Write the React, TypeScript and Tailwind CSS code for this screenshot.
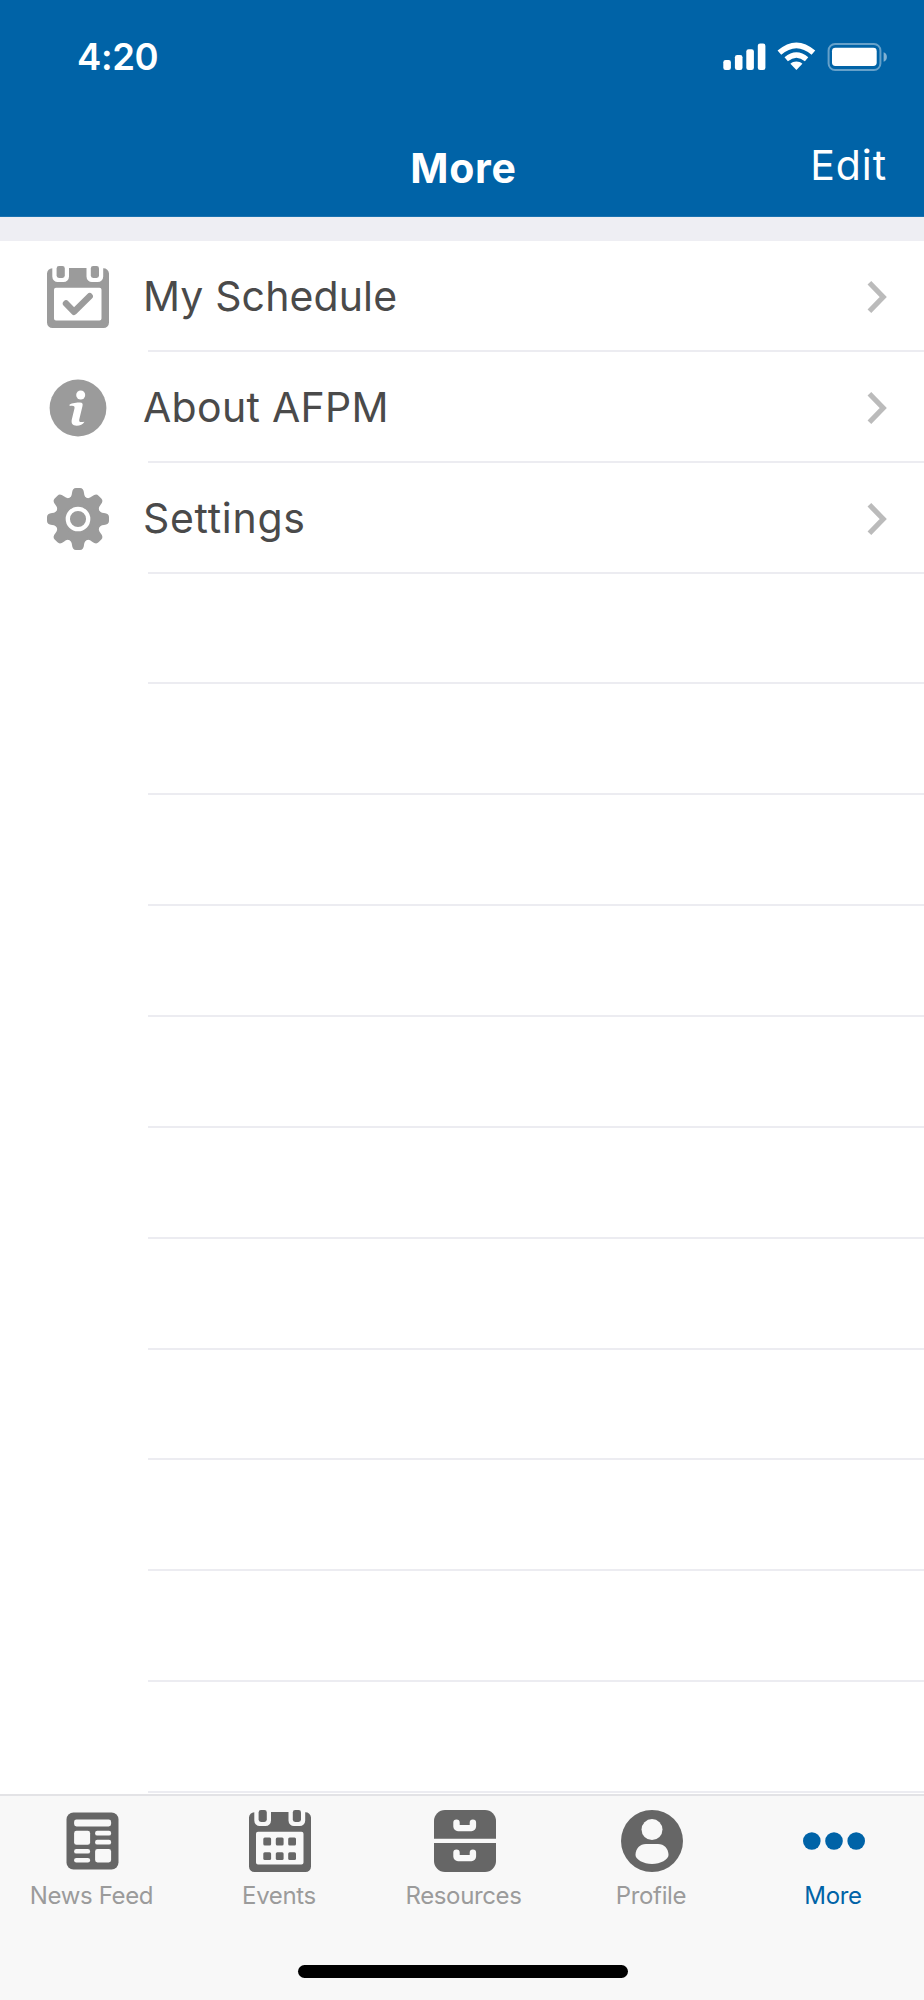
import type React from "react"

interface MenuItem {
  label: string
  icon: React.ReactNode
  tracking: string
}

interface TabItem {
  label: string
  icon: React.ReactNode
  width: string
  active?: boolean
}

const CalendarShell = ({ children }: { children: React.ReactNode }) => (
  <svg width="62" height="62" viewBox="0 0 62 62" fill="none">
    <path
      fill="currentColor"
      fillRule="evenodd"
      d="M5.3 2.2V10.5a5.5 5.5 0 0 0 5.5 5.5h5.7a5.5 5.5 0 0 0 5.5-5.5V2H39.5V10.5a5.5 5.5 0 0 0 5.5 5.5h5.7a5.5 5.5 0 0 0 5.5-5.5V2.2A5.5 5.5 0 0 1 62 7.5V56.5a5.5 5.5 0 0 1-5.5 5.5H5.5A5.5 5.5 0 0 1 0 56.5V7.5A5.5 5.5 0 0 1 5.3 2.2ZM9 21.8a2 2 0 0 0-2 2v28.6a2 2 0 0 0 2 2h43.5a2 2 0 0 0 2-2V23.8a2 2 0 0 0-2-2Z"
    />
    <rect x="9.6" y="0" width="8.2" height="12" rx="2.4" fill="currentColor" />
    <rect x="43.8" y="0" width="8.2" height="12" rx="2.4" fill="currentColor" />
    {children}
  </svg>
)

const ScheduleIcon = () => (
  <CalendarShell>
    <path d="M19 37.5L27 45.8L42.7 30.2" stroke="currentColor" strokeWidth="6.4" strokeLinecap="round" strokeLinejoin="round" />
  </CalendarShell>
)

const InfoIcon = () => (
  <svg width="62" height="62" viewBox="0 0 62 62">
    <circle cx="31" cy="31" r="28.4" fill="currentColor" />
    <circle cx="33.7" cy="18" r="4.5" fill="#fff" />
    <path
      fill="#fff"
      d="M22.6 27.4C25 25.9 30 25.4 33 25.4C35.6 25.4 36 26.8 35.5 29L32.3 42.2C31.8 44.6 32.600 45.800 37.500 44.700C36 47.500 33 48.800 29.700 48.800C25.500 48.800 24 46.400 24.800 42.600L27.400 31.800C28 29.200 27.200 28.200 22.600 28.900Z"
    />
  </svg>
)

const teeth = [0, 45, 90, 135, 180, 225, 270, 315]

const SettingsIcon = () => (
  <svg width="62" height="62" viewBox="0 0 62 62">
    <circle cx="31" cy="31" r="22.5" fill="currentColor" />
    {teeth.map((angle) => (
      <path
        key={angle}
        transform={`rotate(${angle} 31 31)`}
        fill="currentColor"
        d="M25 5Q25.5 0 29 0H33Q36.5 0 37 5Q37.3 9.5 41 10.5L40 16H22L21 10.5Q24.7 9.5 25 5Z"
      />
    ))}
    <circle cx="31" cy="31" r="10.2" fill="none" stroke="#fff" strokeWidth="4.3" />
  </svg>
)

const NewsIcon = () => (
  <svg width="62" height="62" viewBox="0 0 62 62">
    <g transform="translate(-0.5 0)">
      <rect x="5" y="2.5" width="52" height="57" rx="7" fill="currentColor" />
      <g fill="#f8f8f8">
        <rect x="12.6" y="9.5" width="37" height="7" rx="2.4" />
        <rect x="12.6" y="20.8" width="16" height="14" rx="2.4" />
        <rect x="33.6" y="20.8" width="16" height="4.8" rx="2.2" />
        <rect x="33.6" y="29.8" width="16" height="4.8" rx="2.2" />
        <rect x="12.6" y="39" width="16" height="4.6" rx="2.2" />
        <rect x="12.6" y="47.9" width="16" height="4.6" rx="2.2" />
        <rect x="33.6" y="39" width="16" height="13.5" rx="2.4" />
      </g>
    </g>
  </svg>
)

const EventsIcon = () => (
  <CalendarShell>
    {[27.6, 42.3].map((y) =>
      [14.3, 26.8, 39.2].map((x) => (
        <rect key={`${x}-${y}`} x={x} y={y} width="7.8" height="7.8" rx="1.5" fill="currentColor" />
      ))
    )}
  </CalendarShell>
)

const ResourcesIcon = () => (
  <svg width="62" height="62" viewBox="0 0 62 62">
    <path d="M0 28.8V11A11 11 0 0 1 11 0H51A11 11 0 0 1 62 11V28.8Z" fill="currentColor" />
    <path d="M0 33H62V51A11 11 0 0 1 51 62H11A11 11 0 0 1 0 51Z" fill="currentColor" />
    {[0, 30].map((y) => (
      <path
        key={y}
        transform={`translate(0 ${y})`}
        fill="#f8f8f8"
        d="M19.3 12.6a3.2 3.2 0 0 1 6.4 0V15H35.7V12.6a3.2 3.2 0 0 1 6.4 0V16.5a4.7 4.7 0 0 1-4.7 4.7H24a4.7 4.7 0 0 1-4.7-4.7Z"
      />
    ))}
  </svg>
)

const ProfileIcon = () => (
  <svg width="62" height="62" viewBox="0 0 62 62">
    <circle cx="31" cy="31" r="31" fill="currentColor" />
    <circle cx="31" cy="19.6" r="10.5" fill="#f8f8f8" />
    <path d="M14.5 45C14.5 38.5 19 34 25 34H37C43 34 47.5 38.5 47.5 45C47.5 49.5 39.5 54 31 54C22.5 54 14.5 49.5 14.5 45Z" fill="#f8f8f8" />
  </svg>
)

const DotsIcon = () => (
  <svg width="62" height="62" viewBox="0 0 62 62" fill="currentColor">
    <circle cx="8.8" cy="31" r="8.8" />
    <circle cx="31" cy="31" r="8.8" />
    <circle cx="53.2" cy="31" r="8.8" />
  </svg>
)

const StatusIcons = () => (
  <svg width="168" height="30" viewBox="0 0 168 30" fill="#fff">
    <rect x="1.3" y="18" width="7.6" height="10" rx="2.3" />
    <rect x="12.9" y="13" width="7.6" height="15" rx="2.3" />
    <rect x="24.3" y="7.3" width="7.6" height="20.7" rx="2.3" />
    <rect x="35.8" y="1.5" width="7.6" height="26.5" rx="2.3" />
    <path d="M74.4 28L68.4 21.7C71.5 18.7 77.3 18.7 80.4 21.7Z" />
    <path d="M64.2 17.3Q74.4 8.7 84.6 17.3" fill="none" stroke="#fff" strokeWidth="5.2" />
    <path d="M57.4 10.7Q74.4 -4 91.4 10.7" fill="none" stroke="#fff" strokeWidth="5.6" />
    <rect x="106.6" y="2" width="51.8" height="26" rx="6.5" fill="none" stroke="#fff" strokeOpacity=".4" strokeWidth="2" />
    <rect x="110" y="5.8" width="44.7" height="18.2" rx="3.4" />
    <path d="M161.6 10.2Q164.9 11.5 164.9 15T161.6 19.8Z" fillOpacity=".5" />
  </svg>
)

const menuItems: MenuItem[] = [
  { label: "My Schedule", icon: <ScheduleIcon />, tracking: "tracking-[0.12px]" },
  { label: "About AFPM", icon: <InfoIcon />, tracking: "tracking-[0.3px]" },
  { label: "Settings", icon: <SettingsIcon />, tracking: "tracking-[0.7px]" },
]

const emptyRows = Array.from({ length: 11 }, (_, i) => i)

const tabs: TabItem[] = [
  { label: "News Feed", icon: <NewsIcon />, width: "w-[185px]" },
  { label: "Events", icon: <EventsIcon />, width: "w-[190px]" },
  { label: "Resources", icon: <ResourcesIcon />, width: "w-[179px]" },
  { label: "Profile", icon: <ProfileIcon />, width: "w-[196px]" },
  { label: "More", icon: <DotsIcon />, width: "w-[168px]", active: true },
]

export default function App() {
  return (
    <div className="flex h-[2000px] w-[924px] flex-col overflow-hidden bg-white font-['Inter',sans-serif]">
      {/* Header */}
      <header className="h-[217px] shrink-0 border-b border-[#1a72b0] bg-[#0063a7] text-white">
        <div className="flex h-[114px] items-center justify-between pr-[34px] pl-[77px]">
          <span className="text-[36.5px] font-semibold tracking-[-0.4px]">4:20</span>
          <StatusIcons />
        </div>
        <div className="grid h-[102px] grid-cols-3 items-center">
          <h1 className="col-start-2 pt-[5px] pl-[3px] text-center text-[41px] leading-[60px] font-bold tracking-[0.7px]">More</h1>
          <button className="pr-[37px] text-right text-[41px] leading-[60px] tracking-[0.9px]">Edit</button>
        </div>
      </header>

      <div className="h-6 shrink-0 bg-[#eeeef3]" />

      {/* Menu */}
      <main className="h-[1553px] shrink-0 overflow-hidden">
        {menuItems.map((item) => (
          <div key={item.label} className="flex h-[110.87px] pl-[47px]">
            <div className="flex w-[62px] shrink-0 items-center pt-[2px] text-[#9b9b9b]">{item.icon}</div>
            <div className="ml-[39px] flex flex-1 items-center justify-between border-b-2 border-[#ececf1] pt-[3px] pr-[37px]">
              <span className={`-ml-[5px] text-[41px] whitespace-nowrap text-[#4a4a4a] ${item.tracking}`}>{item.label}</span>
              <svg width="20" height="34" viewBox="0 0 20 34" fill="none" stroke="#bbbbbb" strokeWidth="5.2">
                <path d="M2.4 2.8L16.2 17L2.4 31.2" />
              </svg>
            </div>
          </div>
        ))}
        {emptyRows.map((row) => (
          <div key={row} className="h-[110.87px] pl-[148px]">
            <div className="h-full border-b-2 border-[#ececf1]" />
          </div>
        ))}
      </main>

      {/* Tab bar */}
      <footer className="flex flex-1 flex-col items-center justify-between border-t-2 border-[#e3e3e6] bg-[#f8f8f8] pb-[22px]">
        <nav className="flex w-full pt-[14px]">
          {tabs.map((tab) => (
            <button
              key={tab.label}
              className={`flex shrink-0 flex-col items-center ${tab.width} ${
                tab.active ? "text-[#0063a7]" : "text-[#666666]"
              }`}
            >
              {tab.icon}
              <span
                className={`mt-[6px] pr-[2px] text-2xl leading-9 tracking-[-0.35px] whitespace-nowrap ${
                  tab.active ? "" : "text-[#9b9b9b]"
                }`}
              >
                {tab.label}
              </span>
            </button>
          ))}
        </nav>
        <div className="ml-[2px] h-[13px] w-[330px] rounded-full bg-black" />
      </footer>
    </div>
  )
}
